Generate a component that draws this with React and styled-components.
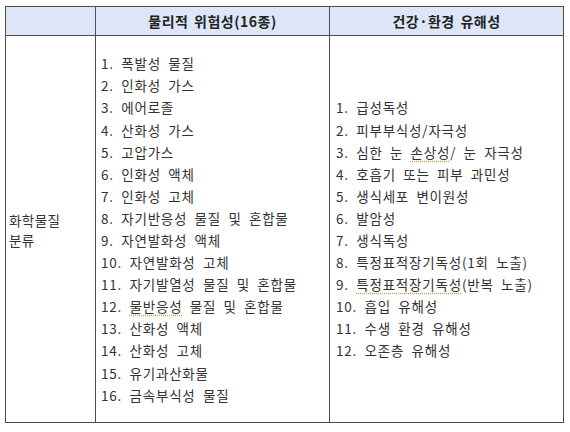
import React from "react";
import styled, { createGlobalStyle } from "styled-components";

const Global = createGlobalStyle`
  html, body { margin: 0; padding: 0; background: #ffffff; }
  body { font-family: "Noto Sans CJK KR", "Noto Sans", sans-serif; }
`;

const Page = styled.div`
  padding: 6px 0 0 5px;
`;

const Table = styled.table`
  border-collapse: collapse;
  table-layout: fixed;
  width: 558px;
  color: #333;
  font-size: 13.5px;
  letter-spacing: 0.8px;
`;

const HeadCell = styled.th`
  background: #dde6f6;
  border: 1px solid #4d4d4d;
  height: 28px;
  padding: 0;
  font-weight: 700;
  font-size: 14px;
  letter-spacing: 0.5px;
  word-spacing: 2px;
  color: #222;
  text-align: center;
  vertical-align: middle;
`;

const BodyCell = styled.td`
  border: 1px solid #4d4d4d;
  height: 386px;
  padding: 0 0 0 ${(p) => p.$pad}px;
  vertical-align: middle;
  text-align: left;
`;

const Label = styled.div`
  line-height: 20px;
  padding-top: 2px;
  letter-spacing: 0.4px;
`;

const List = styled.div`
  display: flex;
  flex-direction: column;
`;

const Item = styled.div`
  line-height: 22.1px;
  white-space: nowrap;
  word-spacing: 3.5px;
`;

const Squiggle = styled.span`
  text-decoration: underline dotted #d49a4a;
  text-underline-offset: 3px;
`;

const physical = [
  "폭발성 물질",
  "인화성 가스",
  "에어로졸",
  "산화성 가스",
  "고압가스",
  "인화성 액체",
  "인화성 고체",
  "자기반응성 물질 및 혼합물",
  "자연발화성 액체",
  "자연발화성 고체",
  "자기발열성 물질 및 혼합물",
  [<Squiggle key="s">물반응성</Squiggle>, " 물질 및 혼합물"],
  "산화성 액체",
  "산화성 고체",
  "유기과산화물",
  "금속부식성 물질",
];

const health = [
  "급성독성",
  "피부부식성/자극성",
  ["심한 눈 ", <Squiggle key="s">손상성</Squiggle>, "/ 눈 자극성"],
  "호흡기 또는 피부 과민성",
  "생식세포 변이원성",
  "발암성",
  "생식독성",
  "특정표적장기독성(1회 노출)",
  [<Squiggle key="s">특정표적장기독성</Squiggle>, "(반복 노출)"],
  "흡입 유해성",
  "수생 환경 유해성",
  "오존층 유해성",
];

export default function App() {
  return (
    <Page>
      <Global />
      <Table>
        <colgroup>
          <col style={{ width: 90 }} />
          <col style={{ width: 234 }} />
          <col style={{ width: 234 }} />
        </colgroup>
        <thead>
          <tr>
            <HeadCell />
            <HeadCell>물리적 위험성(16종)</HeadCell>
            <HeadCell>건강·환경 유해성</HeadCell>
          </tr>
        </thead>
        <tbody>
          <tr>
            <BodyCell $pad={3}>
              <Label>
                화학물질
                <br />
                분류
              </Label>
            </BodyCell>
            <BodyCell $pad={5}>
              <List>
                {physical.map((t, i) => (
                  <Item key={i}>
                    {i + 1}. {t}
                  </Item>
                ))}
              </List>
            </BodyCell>
            <BodyCell $pad={6}>
              <List>
                {health.map((t, i) => (
                  <Item key={i}>
                    {i + 1}. {t}
                  </Item>
                ))}
              </List>
            </BodyCell>
          </tr>
        </tbody>
      </Table>
    </Page>
  );
}
